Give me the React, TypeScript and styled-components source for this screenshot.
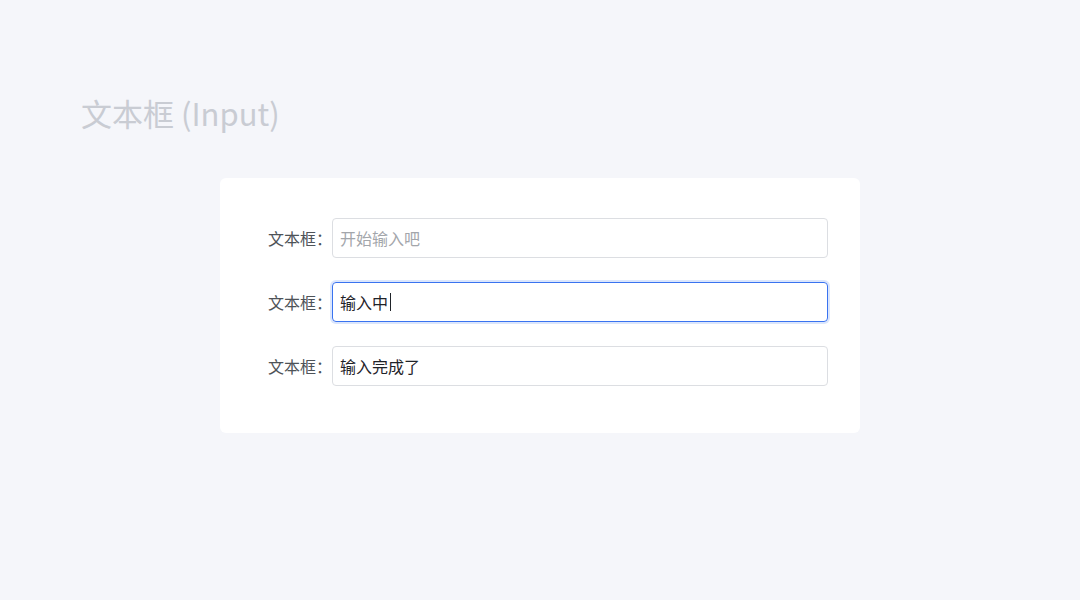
import styled, { createGlobalStyle } from 'styled-components';

const GlobalStyle = createGlobalStyle`
    html, body {
        margin: 0;
        padding: 0;
        background: #f5f6fa;
        font-family: 'Noto Sans CJK SC', 'Noto Sans', sans-serif;
    }
`;

const Page = styled.div`
    width: 1080px;
    height: 600px;
    padding: 91px 0 0 81px;
    box-sizing: border-box;
`;

const Title = styled.h1`
    margin: 0;
    font-size: 31px;
    line-height: 44px;
    font-weight: 400;
    color: #c9ccd3;
`;

const Card = styled.div`
    margin: 43px 0 0 139px;
    width: 640px;
    box-sizing: border-box;
    padding: 40px 32px 47px 48px;
    background: #ffffff;
    border-radius: 6px;
    display: flex;
    flex-direction: column;
    gap: 24px;
`;

const Row = styled.div`
    display: flex;
    align-items: center;
`;

const Label = styled.span`
    width: 64px;
    font-size: 16px;
    color: #4e5358;
    white-space: nowrap;
`;

const Field = styled.div<{ $focused?: boolean }>`
    flex: 1;
    height: 40px;
    box-sizing: border-box;
    display: flex;
    align-items: center;
    padding: 0 7px;
    border-radius: 4px;
    border: ${(p) => (p.$focused ? '1.5px solid #3a73f0' : '1px solid #dcdee2')};
    box-shadow: ${(p) => (p.$focused ? '0 0 0 2px rgba(58, 115, 240, 0.18)' : 'none')};
    font-size: 16px;
    color: #1f2329;
`;

const Placeholder = styled.span`
    color: #a3a6ab;
`;

const Caret = styled.span`
    display: inline-block;
    width: 1px;
    height: 18px;
    margin-left: 2px;
    background: #1f2329;
`;

export default function App() {
    return (
        <>
            <GlobalStyle />
            <Page>
                <Title>文本框 (Input)</Title>
                <Card>
                    <Row>
                        <Label>文本框：</Label>
                        <Field>
                            <Placeholder>开始输入吧</Placeholder>
                        </Field>
                    </Row>
                    <Row>
                        <Label>文本框：</Label>
                        <Field $focused>
                            输入中
                            <Caret />
                        </Field>
                    </Row>
                    <Row>
                        <Label>文本框：</Label>
                        <Field>输入完成了</Field>
                    </Row>
                </Card>
            </Page>
        </>
    );
}
